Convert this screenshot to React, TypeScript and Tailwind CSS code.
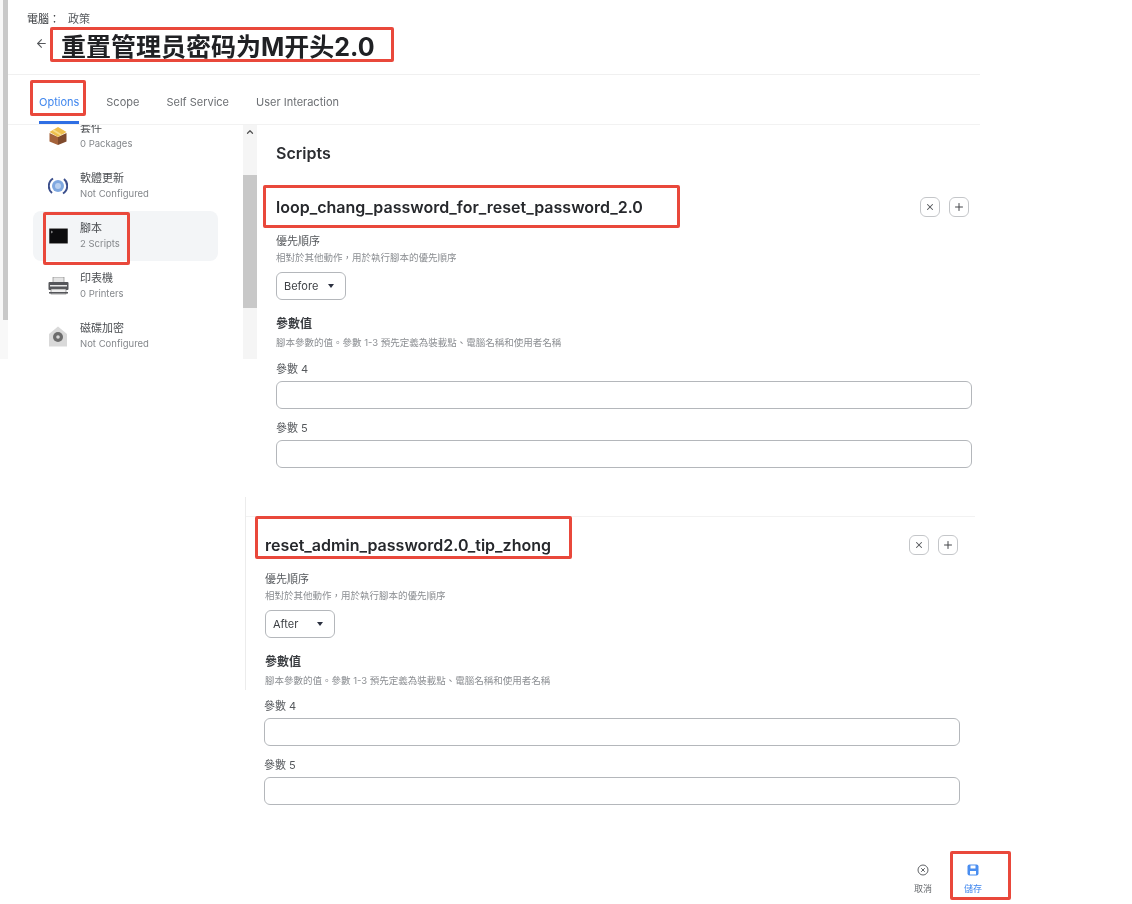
import { ArrowLeft, ChevronUp, Plus, X } from 'lucide-react';
import type { ReactNode } from 'react';

const SIDE_ITEMS = [
  { title: '套件', sub: '0 Packages', icon: 'package' },
  { title: '軟體更新', sub: 'Not Configured', icon: 'update' },
  { title: '腳本', sub: '2 Scripts', icon: 'terminal' },
  { title: '印表機', sub: '0 Printers', icon: 'printer' },
  { title: '磁碟加密', sub: 'Not Configured', icon: 'disk' },
];

function SideIcon({ name }: { name: string }) {
  if (name === 'package') {
    return (
      <svg width="20" height="20" viewBox="0 0 20 20">
        <path d="M1.500 7l8.500 4v8l-8.500-3.500z" fill="#a5633a" />
        <path d="M18.500 7l-8.500 4v8l8.500-3.500z" fill="#7f4a2c" />
        <path d="M10 1l8.500 5-8.500 5-8.500-5z" fill="#eebf4d" />
        <path d="M6 3.500l8 5-1.800 1-8-5z" fill="#f7dc8a" />
      </svg>
    );
  }
  if (name === 'update') {
    return (
      <svg width="20" height="22" viewBox="0 0 20 22">
        <circle cx="10" cy="11" r="6" fill="#7fa8e0" />
        <circle cx="10" cy="11" r="3" fill="#b9d0f0" />
        <path d="M5 3.500A9 9 0 0 0 4 18" fill="none" stroke="#3c4f8c" strokeWidth="2" />
        <path d="M15 18.500A9 9 0 0 0 16 4" fill="none" stroke="#3c4f8c" strokeWidth="2" />
      </svg>
    );
  }
  if (name === 'terminal') {
    return (
      <svg width="19" height="16" viewBox="0 0 19 16">
        <rect x="0" y="0" width="19" height="16" rx="1" fill="#8a8a8a" />
        <rect x="0.500" y="1" width="18" height="14" fill="#0c0c0e" />
        <path d="M2 3l1.500 1L2 5" fill="none" stroke="#d0d0d0" strokeWidth="0.700" />
      </svg>
    );
  }
  if (name === 'printer') {
    return (
      <svg width="21" height="18" viewBox="0 0 21 18">
        <rect x="5" y="0" width="11" height="6" fill="#e4e4e4" stroke="#777" strokeWidth="0.600" />
        <rect x="0.500" y="5" width="20" height="8" rx="1" fill="#55565a" />
        <rect x="2" y="8" width="17" height="1.500" fill="#e8e8e8" />
        <rect x="3" y="12" width="15" height="5" fill="#efefef" stroke="#666" strokeWidth="0.600" />
        <rect x="1" y="15" width="19" height="1.500" fill="#55565a" />
      </svg>
    );
  }
  return (
    <svg width="20" height="21" viewBox="0 0 20 21">
      <path d="M10 0.500L19 8v12.500H1V8z" fill="#d9d9d9" />
      <circle cx="10" cy="11" r="5" fill="#6c6c6c" />
      <circle cx="10" cy="11" r="1.800" fill="#d8d8d8" />
    </svg>
  );
}

function ScriptTop({ name, priority, actionsRight }: { name: string; priority: string; actionsRight: string }) {
  return (
    <>
      <div className="flex h-[42px] items-center justify-between">
        <h3 className="text-[16px] font-semibold text-[#26282c]">{name}</h3>
        <div className={`flex gap-[9px] ${actionsRight}`}>
          <button className="flex h-[20px] w-[20px] items-center justify-center rounded-md border border-[#c4c6c9] text-[#55585c]">
            <X size={10} strokeWidth={2.500} />
          </button>
          <button className="flex h-[20px] w-[20px] items-center justify-center rounded-md border border-[#c4c6c9] text-[#44474b]">
            <Plus size={12} />
          </button>
        </div>
      </div>
      <div className="mt-[5px] text-[11px] leading-[16px] text-[#55585c]">優先順序</div>
      <div className="mt-[2px] text-[9.500px] leading-[14px] text-[#8b8e92]">相對於其他動作，用於執行腳本的優先順序</div>
      <div className="mt-[7px] flex h-[28px] w-[70px] items-center justify-between rounded-md border border-[#b4b7bb] pl-[7px] pr-[11px] text-[11px] text-[#3c3f43]">
        {priority}
        <span className="h-0 w-0 border-x-[3px] border-t-[4px] border-x-transparent border-t-[#2b3040]" />
      </div>
      <div className="mt-[16px] text-[12px] font-semibold leading-[16px] text-[#3a3d41]">參數值</div>
      <div className="mt-[4px] text-[9.500px] leading-[14px] text-[#8b8e92]">腳本參數的值。參數 1-3 預先定義為裝載點、電腦名稱和使用者名稱</div>
    </>
  );
}

function ParamField({ label, className }: { label: string; className: string }) {
  return (
    <div className={className}>
      <div className="text-[11px] leading-[16px] text-[#55585c]">{label}</div>
      <div className="mt-[4px] h-[28px] rounded-md border border-[#b4b7bb] bg-white" />
    </div>
  );
}

function RedBox({ className }: { className: string }) {
  return <div className={`absolute rounded-[2px] border-[3px] border-[#e9483b] ${className}`} />;
}

function FooterAction({ label, active, children }: { label: string; active?: boolean; children: ReactNode }) {
  return (
    <div className={`flex w-[50px] flex-col items-center gap-[7px] text-[9px] leading-[12px] ${active ? 'text-[#3f86ee]' : 'text-[#6a6d71]'}`}>
      {children}
      {label}
    </div>
  );
}

export default function App() {
  return (
    <div className="relative h-[904px] w-[1132px] overflow-hidden bg-white font-['Inter','Noto_Sans_CJK_TC',sans-serif]">
      <div className="blur-[0.5px]">
        <div className="w-[980px]">
          {/* page header */}
          <div className="h-[75px] border-b border-[#f0f0f0] pl-[27px] pt-[12px]">
            <div className="text-[11px] leading-[14px] text-[#55585c]">
              <span className="text-[#33363a]">電腦：</span>
              <span className="ml-[8px]">政策</span>
            </div>
            <div className="mt-[4px] flex items-center">
              <ArrowLeft size={13} className="mb-[7px] ml-[8px] text-[#55585c]" />
              <h1 className="ml-[13px] font-['Inter','Noto_Sans_CJK_SC',sans-serif] text-[25px] font-bold leading-[34px] text-[#202124]">
                重置管理员密码为M开头2.0
              </h1>
            </div>
          </div>

          {/* tabs */}
          <div className="flex h-[50px] items-end gap-[27px] border-b border-[#f2f2f2] pl-[39px] text-[11px] text-[#6c6f73]">
            <div className="flex h-[49px] flex-col items-center justify-end border-b-[3px] border-[#2f6fe4] pb-[11px] text-[#3f86ee]">Options</div>
            <div className="pb-[14px]">Scope</div>
            <div className="pb-[14px]">Self Service</div>
            <div className="pb-[14px]">User Interaction</div>
          </div>
        </div>

        <div className="flex">
          {/* policy payload list */}
          <div className="flex h-[234px] w-[257px] shrink-0">
            <div className="-mt-[125px] h-[359px] w-[8px] shrink-0 bg-[#f8f8f8]">
              <div className="ml-[3px] h-[320px] w-[5px] bg-[#c9c9c9]" />
            </div>
            <div className="w-[235px] shrink-0 overflow-hidden pl-[25px] pr-[25px]">
              <div className="-mt-[14px]">
                {SIDE_ITEMS.map((item) => (
                  <div key={item.title} className={`flex h-[50px] items-center rounded-lg ${item.icon === 'terminal' ? 'bg-[#f3f5f7]' : ''}`}>
                    <div className="flex w-[47px] shrink-0 justify-center pl-[3px]">
                      <SideIcon name={item.icon} />
                    </div>
                    <div>
                      <div className="text-[11px] leading-[16px] text-[#4a4d51]">{item.title}</div>
                      <div className="text-[9.500px] leading-[16px] text-[#85888c]">{item.sub}</div>
                    </div>
                  </div>
                ))}
              </div>
            </div>
            <div className="w-[14px] shrink-0 bg-[#f5f5f5]">
              <div className="flex h-[14px] items-center justify-center text-[#555]">
                <ChevronUp size={10} strokeWidth={3} />
              </div>
              <div className="mt-[36px] h-[133px] bg-[#c8c8c8]" />
            </div>
          </div>

          {/* first script */}
          <div className="ml-[19px] w-[696px]">
            <h2 className="mt-[18px] text-[16px] font-semibold leading-[20px] text-[#2b2d31]">Scripts</h2>
            <div className="mt-[23px]">
              <ScriptTop name="loop_chang_password_for_reset_password_2.0" priority="Before" actionsRight="mr-[3px]" />
            </div>
            <ParamField label="參數 4" className="mt-[11px]" />
            <ParamField label="參數 5" className="mt-[11px]" />
          </div>
        </div>

        {/* second script */}
        <div className="ml-[245px] mt-[29px] h-[193px] w-[730px] overflow-hidden border-l border-[#ececec] pt-[19px]">
          <div className="border-t border-[#f2f2f2] pl-[19px] pr-[17px] pt-[7px]">
            <ScriptTop name="reset_admin_password2.0_tip_zhong" priority="After" actionsRight="" />
          </div>
        </div>
        <div className="ml-[264px] w-[696px]">
          <ParamField label="參數 4" className="mt-[8px]" />
          <ParamField label="參數 5" className="mt-[11px]" />
        </div>

        {/* footer actions */}
        <div className="ml-[898px] mt-[59px] flex">
          <FooterAction label="取消">
            <svg width="12" height="12" viewBox="0 0 12 12" fill="none" stroke="#5f6266" strokeWidth="1">
              <circle cx="6" cy="6" r="5" />
              <path d="M4.200 4.200l3.600 3.600M7.800 4.200l-3.600 3.600" />
            </svg>
          </FooterAction>
          <FooterAction label="儲存" active>
            <svg width="12" height="12" viewBox="0 0 12 12">
              <rect x="0.500" y="0.500" width="11" height="11" rx="2" fill="#4a8ef0" />
              <rect x="3.500" y="1.500" width="5" height="3" fill="#ffffff" />
              <rect x="3" y="7" width="6" height="3.500" fill="#ffffff" />
            </svg>
          </FooterAction>
        </div>
      </div>

      {/* annotations */}
      <RedBox className="left-[50px] top-[27px] h-[35px] w-[344px]" />
      <RedBox className="left-[30px] top-[80px] h-[36px] w-[56px]" />
      <RedBox className="left-[43px] top-[212px] h-[53px] w-[87px]" />
      <RedBox className="left-[263px] top-[185px] h-[43px] w-[417px]" />
      <RedBox className="left-[255px] top-[516px] h-[43px] w-[317px]" />
      <RedBox className="left-[950px] top-[851px] h-[49px] w-[61px]" />
    </div>
  );
}
